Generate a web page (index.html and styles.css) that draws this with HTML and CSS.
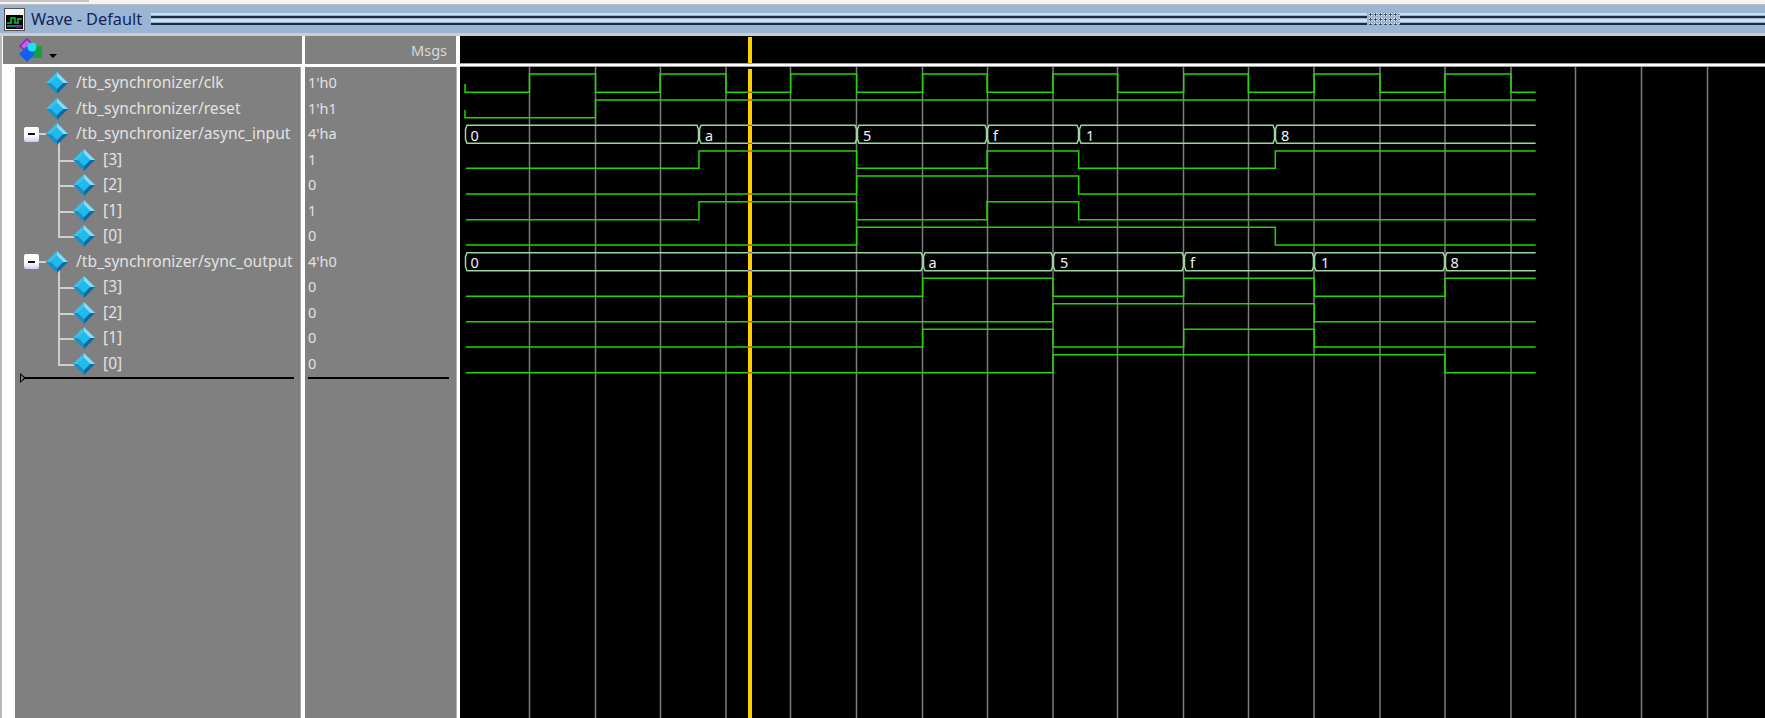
FILE: index.html
```html
<!DOCTYPE html>
<html lang="en">
<head>
<meta charset="utf-8">
<title>Wave - Default</title>
<link rel="stylesheet" href="styles.css">
</head>
<body>
<svg class="defs" width="0" height="0" aria-hidden="true">
  <symbol id="diamond" viewBox="0 0 22 22">
    <polygon points="11,0 0,11 5,11 11,5" fill="#35c3ee"/>
    <polygon points="11,0 22,11 17,11 11,5" fill="#7fdff8"/>
    <polygon points="0,11 11,22 11,17 5,11" fill="#1590c8"/>
    <polygon points="22,11 11,22 11,17 17,11" fill="#0a6ba6"/>
    <polygon points="11,5 17,11 11,17 5,11" fill="#1cbcf0"/>
  </symbol>
</svg>
<div class="top-strip"><div class="top-tab"></div></div>
<header class="titlebar">
  <svg class="title-icon" viewBox="0 0 21 23" aria-hidden="true">
    <rect x="0.5" y="0.5" width="20" height="22" fill="#f4f4f4" stroke="#555"/>
    <rect x="2" y="7" width="17" height="14" fill="#000"/>
    <path d="M3 15H7V10H11V15H14V11H18" fill="none" stroke="#18c040" stroke-width="1.5"/>
    <path d="M3 18H18" fill="none" stroke="#18a0a0" stroke-width="1.5"/>
    <path d="M12 19H18" fill="none" stroke="#6020c0" stroke-width="1.5"/>
  </svg>
  <span class="title-text">Wave - Default</span>
  <div class="grip-line grip-left"></div>
  <div class="grip-dots"></div>
  <div class="grip-line grip-right"></div>
</header>
<main class="panes">
  <section class="col col-names">
    <div class="col-head names-head">
      <svg class="group-icon" viewBox="0 0 25 25" aria-hidden="true">
        <polygon points="9,1 16,8 9,14 2,8" fill="#c860e0" stroke="#9020c0" stroke-width="1.5"/>
        <rect x="12" y="8" width="12" height="12" fill="#18a040"/>
        <polygon points="9,8 17,16 9,24 1,16" fill="#1060f0"/>
        <circle cx="14" cy="9" r="4.5" fill="#20e0f0"/>
      </svg>
      <span class="drop-arrow"></span>
    </div>
    <div class="col-rule"></div>
    <div class="col-body names-body">
      <div class="row top"><svg class="dia"><use href="#diamond"/></svg><span class="label">/tb_synchronizer/clk</span></div>
      <div class="row top"><svg class="dia"><use href="#diamond"/></svg><span class="label">/tb_synchronizer/reset</span></div>
      <div class="row group"><span class="toggle"></span><span class="link"></span><svg class="dia"><use href="#diamond"/></svg><span class="label">/tb_synchronizer/async_input</span></div>
      <div class="row child"><svg class="dia"><use href="#diamond"/></svg><span class="label">[3]</span></div>
      <div class="row child"><svg class="dia"><use href="#diamond"/></svg><span class="label">[2]</span></div>
      <div class="row child"><svg class="dia"><use href="#diamond"/></svg><span class="label">[1]</span></div>
      <div class="row child"><svg class="dia"><use href="#diamond"/></svg><span class="label">[0]</span></div>
      <div class="row group"><span class="toggle"></span><span class="link"></span><svg class="dia"><use href="#diamond"/></svg><span class="label">/tb_synchronizer/sync_output</span></div>
      <div class="row child"><svg class="dia"><use href="#diamond"/></svg><span class="label">[3]</span></div>
      <div class="row child"><svg class="dia"><use href="#diamond"/></svg><span class="label">[2]</span></div>
      <div class="row child"><svg class="dia"><use href="#diamond"/></svg><span class="label">[1]</span></div>
      <div class="row child"><svg class="dia"><use href="#diamond"/></svg><span class="label">[0]</span></div>
      <div class="end-line names-end"><span class="end-mark"></span></div>
    </div>
  </section>
  <section class="col col-values">
    <div class="col-head values-head">Msgs</div>
    <div class="col-rule"></div>
    <div class="col-body values-body">
      <div class="row">1'h0</div>
      <div class="row">1'h1</div>
      <div class="row">4'ha</div>
      <div class="row">1</div>
      <div class="row">0</div>
      <div class="row">1</div>
      <div class="row">0</div>
      <div class="row">4'h0</div>
      <div class="row">0</div>
      <div class="row">0</div>
      <div class="row">0</div>
      <div class="row">0</div>
      <div class="end-line values-end"></div>
    </div>
  </section>
  <section class="col col-wave">
    <div class="wave-head"><div class="cursor-head"></div></div>
    <div class="wave-rule"></div>
    <svg class="wave" viewBox="460 67 1305 651" aria-label="Waveforms">
      <g class="grid">
        <path d="M529.5 67V718M595.5 67V718M660.5 67V718M726 67V718M790.5 67V718M856.5 67V718M922.5 67V718M987.5 67V718M1053 67V718M1117.5 67V718M1183.5 67V718M1248.5 67V718M1314 67V718M1380 67V718M1445 67V718M1511 67V718M1575.5 67V718M1641.5 67V718M1707.5 67V718"/>
      </g>
      <g class="sig">
        <path d="M465 84V92.3H529.5V74H595.5V92.3H660V74H726V92.3H790.7V74H856.7V92.3H922.7V74H987V92.3H1053V74H1117.7V92.3H1183.7V74H1248.3V92.3H1314.3V74H1380V92.3H1445V74H1511V92.3H1535.7"/>
        <path d="M465 110V117.7H595.5V100H1535.7"/>
        <path d="M466 168.3H699V151H856.7V168.3H987V151H1078.7V168.3H1275.3V151H1535.7"/>
        <path d="M466 194H856.7V176H1078.7V194H1535.7"/>
        <path d="M466 219.7H699V201.7H856.7V219.7H987V201.7H1078.7V219.7H1535.7"/>
        <path d="M466 245H856.7V227.3H1275.3V245H1535.7"/>
        <path d="M466 296.3H922.7V278.3H1053V296.3H1183.7V278.3H1314.3V296.3H1445V278.3H1535.7"/>
        <path d="M466 321.7H1053V303.7H1314.3V321.7H1535.7"/>
        <path d="M466 347H922.7V329.3H1053V347H1183.7V329.3H1314.3V347H1535.7"/>
        <path d="M466 372.7H1053V354.7H1445V372.7H1535.7"/>
      </g>
      <g class="bus">
        <path d="M467 125.3L465.5 129.3V139.3L467 143.3H697L698.5 139.3V129.3L697 125.3Z"/>
        <path d="M701 125.3L699.5 129.3V139.3L701 143.3H855L856.5 139.3V129.3L855 125.3Z"/>
        <path d="M859 125.3L857.5 129.3V139.3L859 143.3H985L986.5 139.3V129.3L985 125.3Z"/>
        <path d="M989 125.3L987.5 129.3V139.3L989 143.3H1077L1078.5 139.3V129.3L1077 125.3Z"/>
        <path d="M1081 125.3L1079.5 129.3V139.3L1081 143.3H1273L1274.5 139.3V129.3L1273 125.3Z"/>
        <path d="M1535.7 125.3H1277L1275.5 129.3V139.3L1277 143.3H1535.7"/>
        <path d="M467 252.7L465.5 256.7V266.7L467 270.7H921L922.5 266.7V256.7L921 252.7Z"/>
        <path d="M925 252.7L923.5 256.7V266.7L925 270.7H1051L1052.5 266.7V256.7L1051 252.7Z"/>
        <path d="M1055 252.7L1053.5 256.7V266.7L1055 270.7H1182L1183.5 266.7V256.7L1182 252.7Z"/>
        <path d="M1186 252.7L1184.5 256.7V266.7L1186 270.7H1312L1313.5 266.7V256.7L1312 252.7Z"/>
        <path d="M1316 252.7L1314.5 256.7V266.7L1316 270.7H1443L1444.5 266.7V256.7L1443 252.7Z"/>
        <path d="M1535.7 252.7H1447L1445.5 256.7V266.7L1447 270.7H1535.7"/>
      </g>
      <g class="bus-text">
        <text x="470.5" y="140.5">0</text>
        <text x="705" y="140.5">a</text>
        <text x="863" y="140.5">5</text>
        <text x="993" y="140.5">f</text>
        <text x="1086" y="140.5">1</text>
        <text x="1281" y="140.5">8</text>
        <text x="470.5" y="268">0</text>
        <text x="928.5" y="268">a</text>
        <text x="1060" y="268">5</text>
        <text x="1190" y="268">f</text>
        <text x="1321" y="268">1</text>
        <text x="1450.5" y="268">8</text>
      </g>
      <rect class="cursor" x="748" y="69" width="4" height="649"/>
      <path class="cross-sig" d="M748 92.3H752M748 100H752M748 151H752M748 194H752M748 201.7H752M748 245H752M748 296.3H752M748 321.7H752M748 347H752M748 372.7H752"/>
      <path class="cross-bus" d="M748 125.3H752M748 143.3H752M748 252.7H752M748 270.7H752"/>
    </svg>
  </section>
</main>
</body>
</html>
```

FILE: styles.css
```css
* { box-sizing: border-box; }

html, body {
  margin: 0;
  height: 100%;
  overflow: hidden;
  background: #f2f2f2;
  font-family: "Noto Sans", "Liberation Sans", sans-serif;
  font-size: 14.5px;
}

body {
  display: flex;
  flex-direction: column;
  height: 718px;
}

.defs { display: block; height: 0; }

.top-strip {
  height: 5px;
  flex: none;
  background: #f4f4f4;
  border-bottom: 1px solid #bdbdbd;
}

.top-tab {
  width: 89px;
  height: 2px;
  background: #c4c4c4;
}

.titlebar {
  flex: none;
  height: 31px;
  display: flex;
  align-items: center;
  background: #9bb6d4;
  padding-left: 4px;
  border-bottom: 3px solid #cdcdcd;
}

.title-icon {
  width: 21px;
  height: 23px;
  flex: none;
}

.title-text {
  margin-left: 6px;
  width: 120px;
  flex: none;
  color: #14235a;
  font-size: 16.3px;
  white-space: nowrap;
}

.grip-line {
  height: 12px;
  background:
    linear-gradient(#c5e2f5, #c5e2f5) 0 0 / 100% 2px no-repeat,
    linear-gradient(#1c2a3a, #1c2a3a) 0 3px / 100% 2px no-repeat,
    linear-gradient(#c5e2f5, #c5e2f5) 0 6px / 100% 3px no-repeat,
    linear-gradient(#1c2a3a, #1c2a3a) 0 10px / 100% 2px no-repeat;
}

.grip-left { flex: 1 1 auto; }

.grip-right {
  flex: none;
  width: 365px;
}

.grip-dots {
  flex: none;
  width: 33px;
  height: 12px;
  background-image:
    radial-gradient(circle, #2a3440 0.9px, transparent 1.3px),
    radial-gradient(circle, #e6f0fa 1.6px, transparent 2px);
  background-size: 5px 5px;
  background-position: 1px -1px;
}

.panes {
  flex: 1;
  min-height: 0;
  display: flex;
  background: #fff;
}

.col {
  flex: none;
  display: flex;
  flex-direction: column;
}

.col-names {
  width: 305px;
  padding-left: 3px;
  border-left: 2px solid #b8b8b8;
  background: #fff;
}

.col-values {
  width: 155px;
  background: #fff;
}

.col-wave {
  flex: 1;
  min-width: 0;
  background: #000;
}

.col-head {
  height: 28px;
  flex: none;
  background: #808080;
  color: #d8d8d8;
}

.names-head {
  margin-left: -2px;
  width: 299px;
  display: flex;
  align-items: center;
  padding-left: 15px;
}

.group-icon {
  width: 25px;
  height: 25px;
  flex: none;
}

.drop-arrow {
  margin: 11px 0 0 6px;
  border-left: 4px solid transparent;
  border-right: 4px solid transparent;
  border-top: 4px solid #000;
}

.values-head {
  width: 151px;
  text-align: right;
  padding-right: 9px;
  line-height: 29px;
}

.col-rule {
  height: 3px;
  flex: none;
  background: #fff;
}

.col-body {
  flex: 1;
  min-height: 0;
  padding-top: 3.25px;
  color: #e2e2e2;
  background: #808080;
}

.names-body {
  margin-left: 10px;
  margin-right: 4px;
  border-right: 1px solid #a8a8a8;
  font-size: 15.6px;
}

.values-body {
  width: 152px;
  border-right: 1px solid #b4b4b4;
}

.row {
  height: 25.5px;
  display: flex;
  align-items: center;
  white-space: nowrap;
  position: relative;
}

.label { margin-top: -2px; }

.values-body .row {
  padding-left: 3px;
  padding-bottom: 2px;
}

.dia {
  width: 22px;
  height: 22px;
  flex: none;
  margin-right: 8px;
  position: relative;
  z-index: 1;
}

.row.top { padding-left: 31px; }

.row.group { padding-left: 9px; }

.row.child { padding-left: 58px; }

.toggle {
  width: 15px;
  height: 15px;
  flex: none;
  position: relative;
  border-radius: 2px;
  background: linear-gradient(#ffffff 55%, #c8cfe8);
}

.toggle::after {
  content: "";
  position: absolute;
  left: 4px;
  top: 6.5px;
  width: 7px;
  height: 2px;
  background: #111;
}

.link {
  width: 7px;
  height: 2px;
  flex: none;
  background: #cfcfcf;
}

.row.child::before {
  content: "";
  position: absolute;
  left: 43px;
  top: -13px;
  width: 16px;
  height: 26px;
  border-left: 2px solid #cfcfcf;
  border-bottom: 2px solid #cfcfcf;
}

.end-line {
  height: 1.5px;
  background: #000;
  position: relative;
  margin-top: 0.75px;
}

.names-end {
  margin-left: 6px;
  margin-right: 6px;
}

.end-mark {
  position: absolute;
  left: -1px;
  top: -4px;
  width: 0;
  height: 0;
  border-top: 5px solid transparent;
  border-bottom: 5px solid transparent;
  border-left: 6px solid #000;
}

.end-mark::after {
  content: "";
  position: absolute;
  left: -5px;
  top: -3px;
  width: 0;
  height: 0;
  border-top: 3px solid transparent;
  border-bottom: 3px solid transparent;
  border-left: 3.5px solid #808080;
}

.values-end {
  margin-left: 3px;
  margin-right: 7px;
}

.wave-head {
  height: 27px;
  flex: none;
  background: #000;
  padding: 1px 0 0 288px;
}

.cursor-head {
  width: 4px;
  height: 26px;
  background: #ffcf00;
}

.wave-rule {
  height: 4px;
  flex: none;
  background: #fff;
  border-top: 1px solid #a0a0a0;
  border-bottom: 1px solid #a0a0a0;
}

.wave {
  display: block;
  width: 1305px;
  height: 651px;
  flex: none;
}

.grid path {
  fill: none;
  stroke: #7c7c7c;
  stroke-width: 1.5;
}

.sig path {
  fill: none;
  stroke: #20d800;
  stroke-width: 1.5;
}

.bus path {
  fill: none;
  stroke: #9ed49e;
  stroke-width: 1.5;
}

.bus-text text {
  fill: #eef4f8;
  font-family: "Noto Sans", "Liberation Sans", sans-serif;
  font-size: 14.5px;
}

.cursor { fill: #ffcf00; }

.cross-sig {
  fill: none;
  stroke: #e8500a;
  stroke-width: 1.4;
}

.cross-bus {
  fill: none;
  stroke: #7a68a8;
  stroke-width: 1.3;
}
```
